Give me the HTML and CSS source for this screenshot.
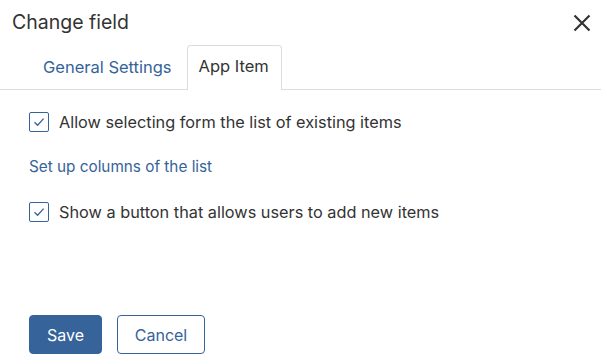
FILE: index.html
```html
<!DOCTYPE html>
<html>
<head>
<meta charset="utf-8">
<link rel="stylesheet" href="styles.css">
</head>
<body>
<div class="dialog">
  <div class="header">
    <h1 class="title">Change field</h1>
    <button class="close" aria-label="Close">
      <svg width="18" height="18" viewBox="0 0 18 18"><path d="M1.5 1.5 L16.5 16.5 M16.5 1.5 L1.5 16.5" stroke="#333" stroke-width="2.2" fill="none"/></svg>
    </button>
  </div>
  <div class="tabs">
    <div class="tab">General Settings</div>
    <div class="tab active">App Item</div>
  </div>
  <div class="content">
    <label class="check">
      <span class="box"><svg width="14" height="14" viewBox="0 0 14 14"><path d="M2.5 7.2 L5.6 10.2 L11.6 3.6" stroke="#35639a" stroke-width="1.3" fill="none"/></svg></span>
      <span>Allow selecting form the list of existing items</span>
    </label>
    <a class="link">Set up columns of the list</a>
    <label class="check">
      <span class="box"><svg width="14" height="14" viewBox="0 0 14 14"><path d="M2.5 7.2 L5.6 10.2 L11.6 3.6" stroke="#35639a" stroke-width="1.3" fill="none"/></svg></span>
      <span>Show a button that allows users to add new items</span>
    </label>
  </div>
  <div class="footer">
    <button class="btn primary">Save</button>
    <button class="btn secondary">Cancel</button>
  </div>
</div>
</body>
</html>
```
FILE: styles.css
```css
* { box-sizing: border-box; }
html, body { margin: 0; padding: 0; background: #fff; }
body { font-family: Inter, "Noto Sans", sans-serif; color: #333; }
.dialog { width: 601px; height: 360px; display: flex; flex-direction: column; }
.header { display: flex; justify-content: space-between; align-items: center; padding: 4px 10px 0 12px; height: 40px; }
.title { margin: 0; font-size: 19.5px; font-weight: 400; line-height: 28px; color: #333; }
.close { border: 0; background: none; padding: 0; width: 18px; height: 18px; margin-top: 2px; }
.close svg { display: block; }
.tabs { display: flex; align-items: flex-end; height: 50px; padding-left: 29px; border-bottom: 1px solid #dcdcdc; }
.tab { font-size: 16.5px; line-height: 20px; padding: 10px 14px 13px 13px; color: #35639a; border: 1px solid transparent; border-bottom: 0; border-radius: 4px 4px 0 0; margin-bottom: -1px; }
.tab.active { color: #333; background: #fff; border-color: #dcdcdc; padding: 10px 12px 14px 11px; }
.content { padding: 22px 29px 0; display: flex; flex-direction: column; align-items: flex-start; }
.check { display: flex; align-items: center; gap: 10px; font-size: 16.3px; line-height: 20px; }
.box { width: 20px; height: 20px; border: 1px solid #35639a; border-radius: 2px; display: flex; align-items: center; justify-content: center; }
.link { color: #35639a; font-size: 15.3px; line-height: 20px; margin: 25px 0 25px; }
.footer { margin-top: auto; padding: 0 29px 6px; display: flex; gap: 15px; }
.btn { font-family: Inter, "Noto Sans", sans-serif; font-size: 16px; height: 39px; border-radius: 4px; padding: 0 16px; }
.btn.primary { background: #35639a; color: #fff; border: 1px solid #35639a; width: 73px; }
.btn.secondary { background: #fff; color: #35639a; border: 1px solid #35639a; width: 88px; }
```
